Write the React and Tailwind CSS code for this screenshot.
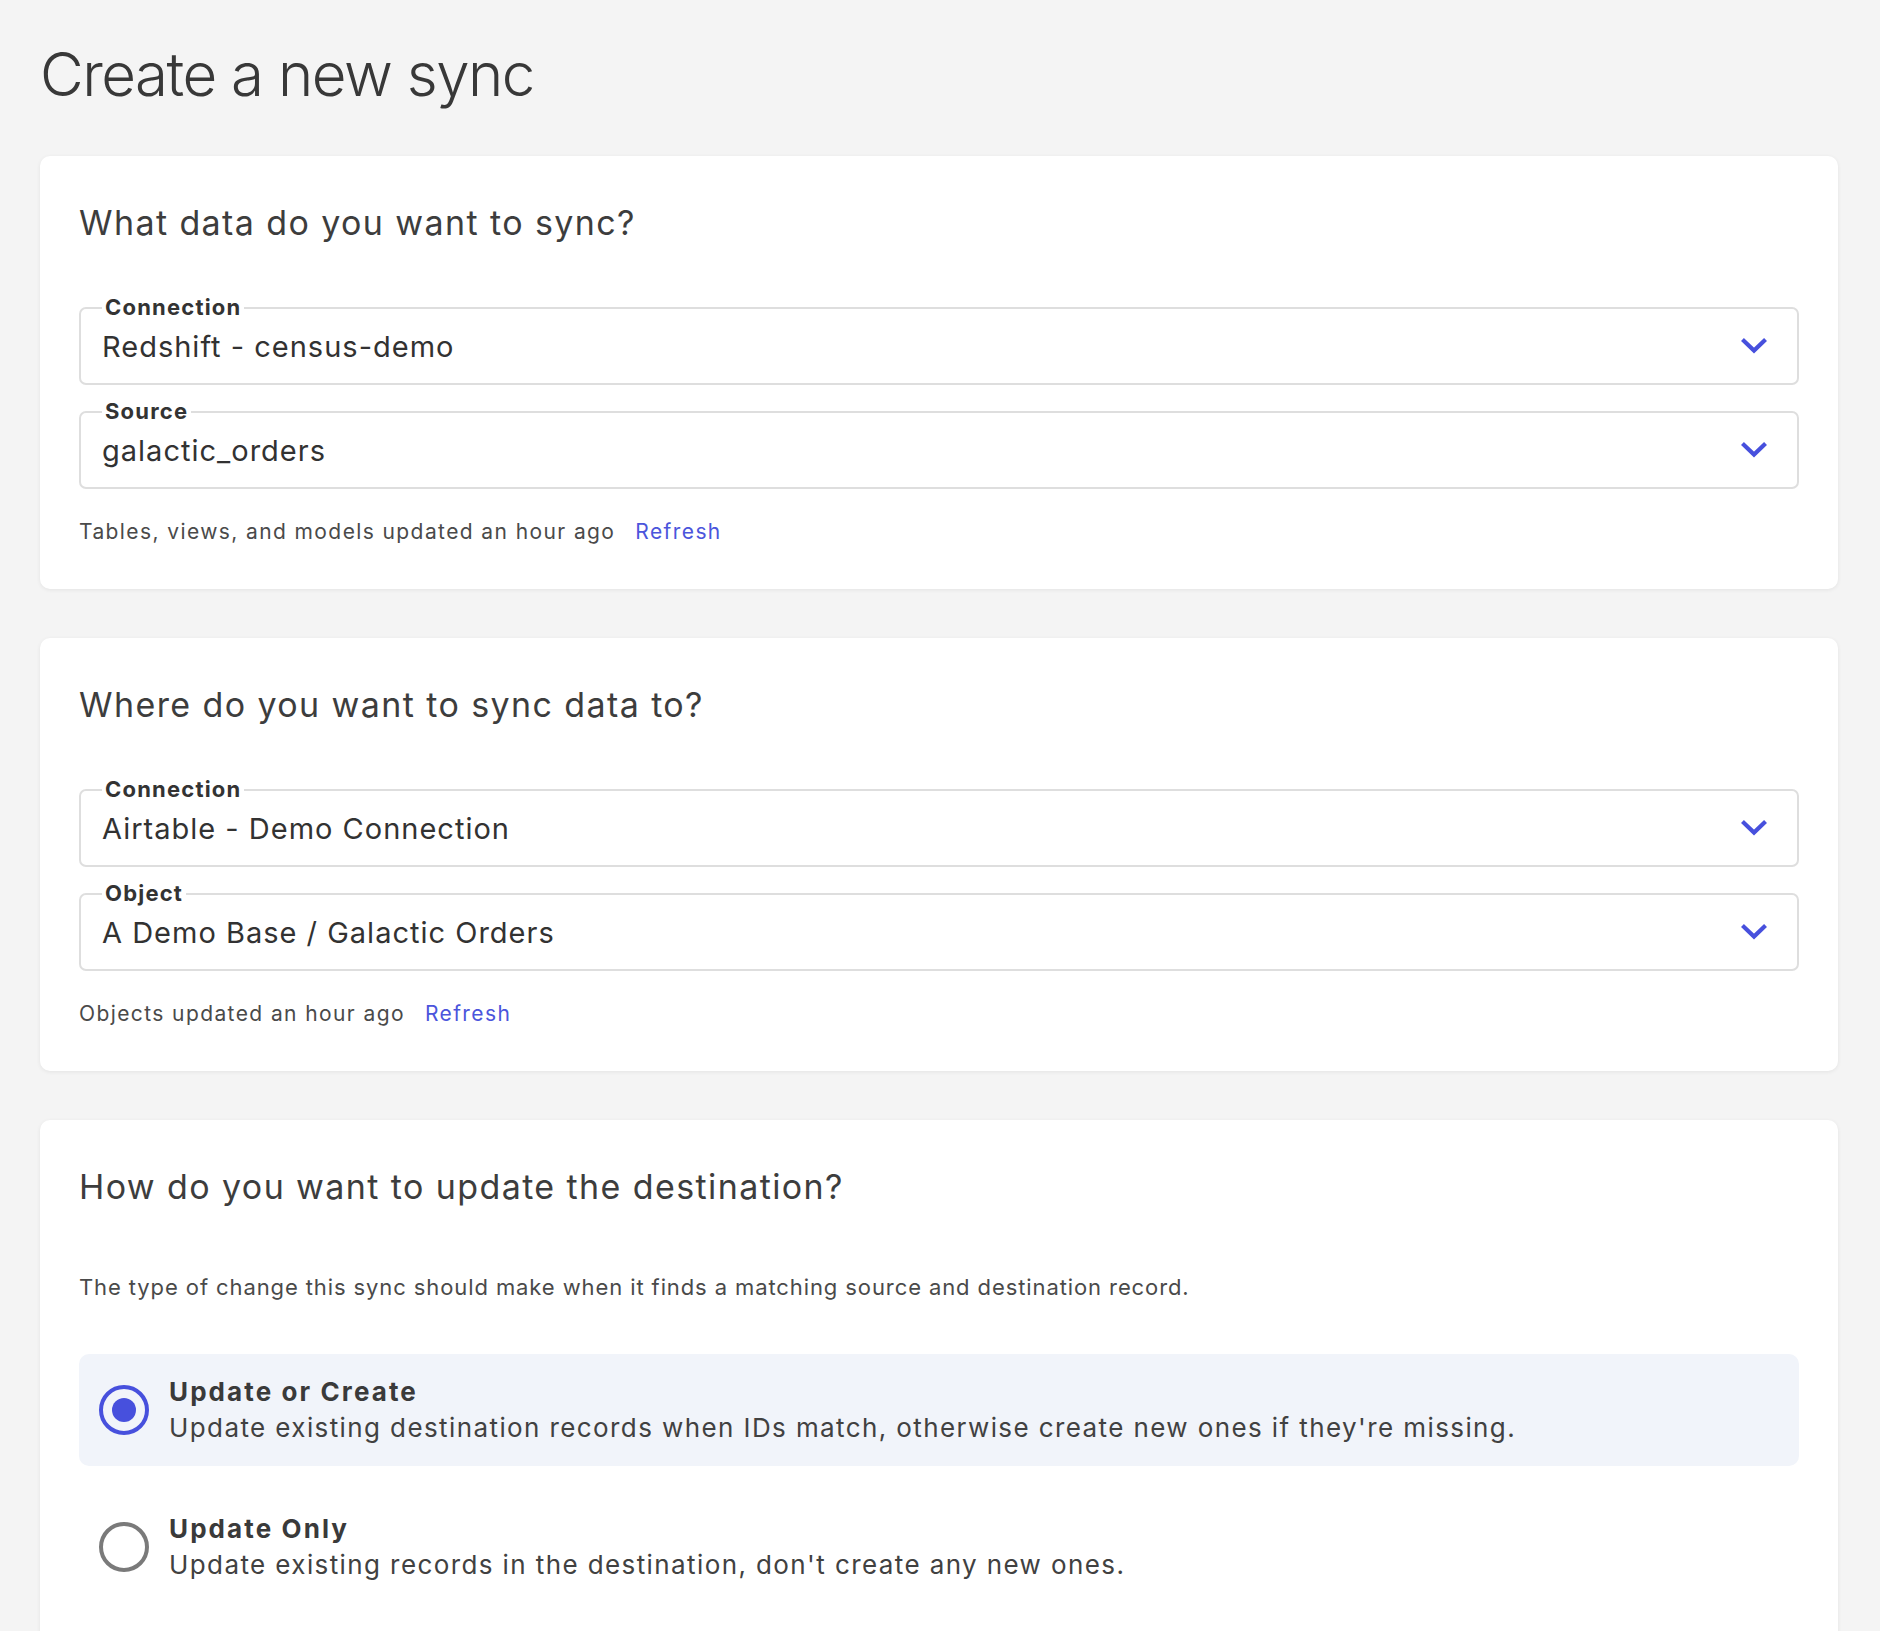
import React from 'react';

function Chevron() {
  return (
    <svg width="26" height="16" viewBox="0 0 26 16" fill="none" className="shrink-0">
      <path d="M3 3 L13 12.5 L23 3" stroke="#4750dd" strokeWidth="4.2" strokeLinecap="square" strokeLinejoin="miter" />
    </svg>
  );
}

function SelectField({ label, value }) {
  return (
    <div className="relative h-[78px] rounded-[7px] border-2 border-[#dedede] bg-white flex items-center justify-between pl-[21px] pr-[30px]">
      <span className="absolute -top-[13px] left-[21px] bg-white px-[3px] text-[22px] leading-[22px] font-bold tracking-[1.2px] text-[#333333]">
        {label}
      </span>
      <span className="text-[29px] leading-none tracking-[1px] text-[#323232]">{value}</span>
      <Chevron />
    </div>
  );
}

function Card({ title, children }) {
  return (
    <div className="bg-white rounded-[10px] shadow-[0_1px_4px_rgba(0,0,0,0.07)] pt-[50px] px-[39px] pb-[47px]">
      <h2 className="text-[34px] leading-none font-normal tracking-[1.4px] text-[#3d3d3d]">{title}</h2>
      {children}
    </div>
  );
}

function RadioOption({ selected, title, description }) {
  return (
    <div className={`flex items-center h-[112px] rounded-[10px] pl-[20px] ${selected ? 'bg-[#f1f4fa]' : ''}`}>
      {selected ? (
        <div className="w-[50px] h-[50px] rounded-full border-[4px] border-[#4750dd] flex items-center justify-center shrink-0">
          <div className="w-[24px] h-[24px] rounded-full bg-[#4750dd]" />
        </div>
      ) : (
        <div className="w-[50px] h-[50px] rounded-full border-[4px] border-[#7a7a7a] shrink-0" />
      )}
      <div className="ml-[20px] text-[26px] leading-[36px] text-[#414141]">
        <div className="font-bold tracking-[2.1px] text-[#3a3a3a]">{title}</div>
        <div className="tracking-[1.4px]">{description}</div>
      </div>
    </div>
  );
}

export default function App() {
  return (
    <div className="min-h-screen bg-[#f4f4f4] font-['Inter','Liberation_Sans',sans-serif] pt-[44px] pl-10 pr-[42px] pb-10">
      <h1 className="text-[60px] leading-none font-light text-[#383838] tracking-[-1.5px]">Create a new sync</h1>

      <div className="mt-[52px] flex flex-col gap-[49px]">
        <Card title="What data do you want to sync?">
          <div className="mt-[67px] flex flex-col gap-[26px]">
            <SelectField label="Connection" value="Redshift - census-demo" />
            <SelectField label="Source" value="galactic_orders" />
          </div>
          <p className="mt-[32px] text-[21px] leading-none tracking-[1.4px] text-[#4a4a4a]">
            Tables, views, and models updated an hour ago
            <span className="ml-[20px] text-[#4b55dc]">Refresh</span>
          </p>
        </Card>

        <Card title="Where do you want to sync data to?">
          <div className="mt-[67px] flex flex-col gap-[26px]">
            <SelectField label="Connection" value="Airtable - Demo Connection" />
            <SelectField label="Object" value="A Demo Base / Galactic Orders" />
          </div>
          <p className="mt-[32px] text-[21px] leading-none tracking-[1.4px] text-[#4a4a4a]">
            Objects updated an hour ago
            <span className="ml-[20px] text-[#4b55dc]">Refresh</span>
          </p>
        </Card>

        <Card title="How do you want to update the destination?">
          <p className="mt-[72px] text-[22px] leading-none tracking-[0.9px] text-[#4a4a4a]">
            The type of change this sync should make when it finds a matching source and destination record.
          </p>
          <div className="mt-[56px] flex flex-col gap-[25px]">
            <RadioOption
              selected
              title="Update or Create"
              description="Update existing destination records when IDs match, otherwise create new ones if they're missing."
            />
            <RadioOption
              title="Update Only"
              description="Update existing records in the destination, don't create any new ones."
            />
          </div>
        </Card>
      </div>
    </div>
  );
}
